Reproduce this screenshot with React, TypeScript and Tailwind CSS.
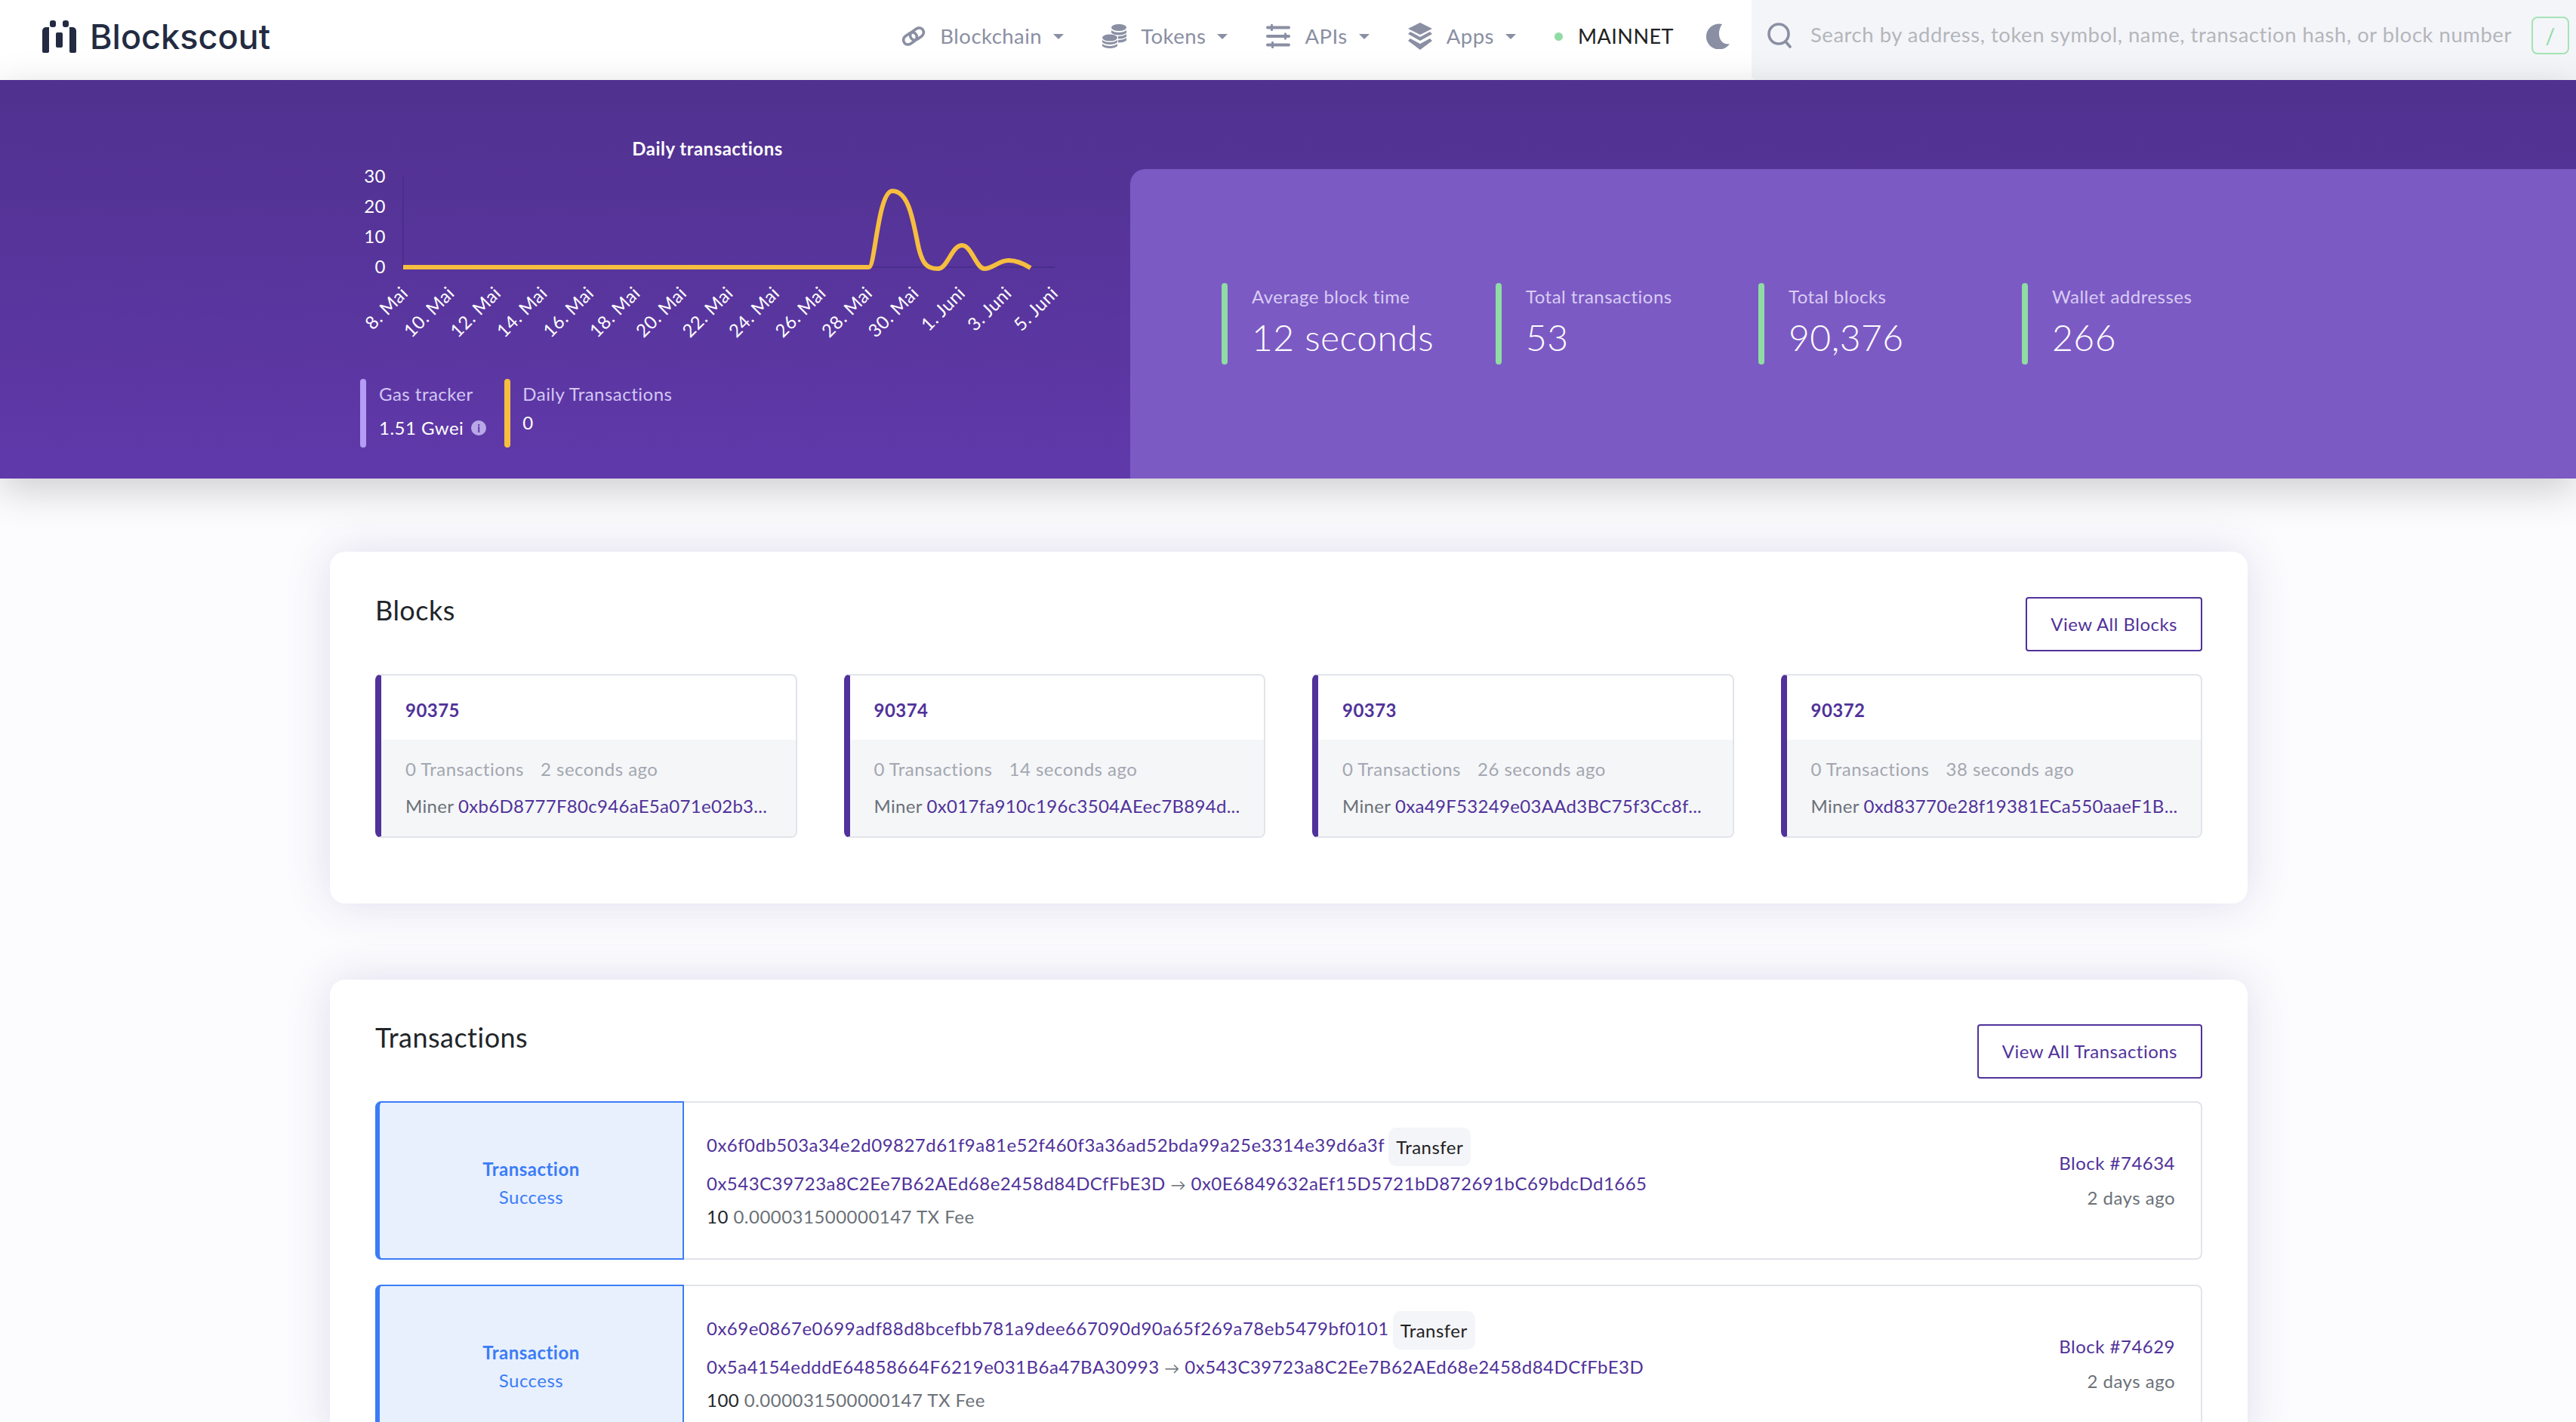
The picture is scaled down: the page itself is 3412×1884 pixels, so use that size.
const blocks = [
  { num: '90375', ago: '2 seconds ago', miner: '0xb6D8777F80c946aE5a071e02b3...' },
  { num: '90374', ago: '14 seconds ago', miner: '0x017fa910c196c3504AEec7B894d...' },
  { num: '90373', ago: '26 seconds ago', miner: '0xa49F53249e03AAd3BC75f3Cc8f...' },
  { num: '90372', ago: '38 seconds ago', miner: '0xd83770e28f19381ECa550aaeF1B...' },
];

const txs = [
  {
    hash: '0x6f0db503a34e2d09827d61f9a81e52f460f3a36ad52bda99a25e3314e39d6a3f',
    from: '0x543C39723a8C2Ee7B62AEd68e2458d84DCfFbE3D',
    to: '0x0E6849632aEf15D5721bD872691bC69bdcDd1665',
    value: '10',
    block: 'Block #74634',
  },
  {
    hash: '0x69e0867e0699adf88d8bcefbb781a9dee667090d90a65f269a78eb5479bf0101',
    from: '0x5a4154edddE64858664F6219e031B6a47BA30993',
    to: '0x543C39723a8C2Ee7B62AEd68e2458d84DCfFbE3D',
    value: '100',
    block: 'Block #74629',
  },
];

const xLabels = ['8. Mai', '10. Mai', '12. Mai', '14. Mai', '16. Mai', '18. Mai', '20. Mai', '22. Mai', '24. Mai', '26. Mai', '28. Mai', '30. Mai', '1. Juni', '3. Juni', '5. Juni'];

function Caret() {
  return <span className="ml-[15px] h-0 w-0 border-x-[7px] border-t-[7px] border-x-transparent border-t-[#8a8fa3]" />;
}

function NavItem({ icon, label }: { icon: React.ReactNode; label: string }) {
  return (
    <div className="flex items-center">
      {icon}
      <span className="ml-[19px] text-[27.5px] text-[#8a8fa3]">{label}</span>
      <Caret />
    </div>
  );
}

function LinkIcon() {
  return (
    <svg viewBox="0 0 32 26" className="h-[26px] w-[32px]" fill="none" stroke="#8a8fa3" strokeWidth="3.6">
      <rect x="2" y="10" width="19" height="12" rx="6" transform="rotate(-35 11.5 16)" />
      <rect x="11" y="4" width="19" height="12" rx="6" transform="rotate(-35 20.5 10)" />
    </svg>
  );
}

function CoinsIcon() {
  return (
    <svg viewBox="0 0 32 32" className="h-[32px] w-[32px]" fill="#8a8fa3">
      <ellipse cx="22" cy="4.5" rx="10" ry="4.5" />
      <path d="M12 8c2 2 6 3 10 3s8-1 10-3v3.5c-2 2-6 3-10 3s-8-1-10-3z" />
      <path d="M21 16c5 0 9-1 11-3v3.5c-2 2-6 3-11 3z" />
      <path d="M21 21c5 0 9-1 11-3v3.5c-2 2-6 3-11 3z" />
      <ellipse cx="10" cy="18" rx="10" ry="4.5" />
      <path d="M0 21c2 2 6 3 10 3s8-1 10-3v3c-2 2-6 3-10 3s-8-1-10-3z" />
      <path d="M0 26c2 2 6 3 10 3s8-1 10-3v3c-2 2-6 3-10 3s-8-1-10-3z" />
    </svg>
  );
}

function SlidersIcon() {
  return (
    <svg viewBox="0 0 32 34" className="h-[34px] w-[32px]" fill="#8a8fa3">
      <rect x="0" y="3.5" width="32" height="4" rx="2" />
      <rect x="6" y="1" width="3" height="9" rx="1" />
      <rect x="0" y="15" width="32" height="4" rx="2" />
      <rect x="24" y="12.5" width="3" height="9" rx="1" />
      <rect x="0" y="26.5" width="32" height="4" rx="2" />
      <rect x="7" y="24" width="3" height="9" rx="1" />
    </svg>
  );
}

function LayersIcon() {
  return (
    <svg viewBox="0 0 32 36" className="h-[36px] w-[32px]" fill="#8a8fa3">
      <path d="M16 0 32 8 16 16 0 8z" />
      <path d="M3 12 16 19 29 12 32 15 16 24 0 15z" />
      <path d="M3 21 16 28 29 21 32 24 16 36 0 24z" />
    </svg>
  );
}

function Header() {
  return (
    <header className="flex h-[106px] items-center bg-white">
      <div className="flex items-center pb-[10px] pl-[56px]">
        <svg viewBox="0 0 45 43" className="h-[43px] w-[45px]" fill="#232b42">
          <path d="M0 14a5 5 0 0 1 5-5h4v32a2 2 0 0 1-2 2H2a2 2 0 0 1-2-2z" />
          <path d="M45 14a5 5 0 0 0-5-5h-4v32a2 2 0 0 0 2 2h5a2 2 0 0 0 2-2z" />
          <rect x="10" y="0" width="8" height="9" rx="3" />
          <rect x="27" y="0" width="8" height="9" rx="3" />
          <rect x="18" y="16" width="9" height="20" rx="2" />
        </svg>
        <span className='ml-[18px] font-["Inter",sans-serif] text-[45px] leading-none font-medium tracking-normal text-[#232b42]'>Blockscout</span>
      </div>
      <nav className="ml-auto flex items-center gap-[43px] pr-[28px] pb-[10px]">
        <div className="mr-[8px] flex items-center gap-[51px]">
          <NavItem icon={<LinkIcon />} label="Blockchain" />
          <NavItem icon={<CoinsIcon />} label="Tokens" />
          <NavItem icon={<SlidersIcon />} label="APIs" />
          <NavItem icon={<LayersIcon />} label="Apps" />
        </div>
        <div className="flex items-center gap-[20px]">
          <span className="h-[11px] w-[11px] rounded-full bg-[#8fdca4]" />
          <span className="text-[27px] text-[#222]">MAINNET</span>
        </div>
        <svg viewBox="0 0 32 34" className="h-[34px] w-[32px]" fill="#8a8fa3">
          <path d="M21 1A17 17 0 1 0 31 27C19 30 12 14 21 1z" />
        </svg>
      </nav>
      <div className="flex h-full w-[1092px] items-center rounded-bl-[6px] bg-[#f4f5f9] pr-[9px] pb-[12px] pl-[21px]">
        <svg viewBox="0 0 32 34" className="h-[34px] w-[32px]" fill="none" stroke="#8a8fa3" strokeWidth="3.6" strokeLinecap="round">
          <circle cx="15" cy="15" r="13" />
          <path d="m24 25 6 7" />
        </svg>
        <span className="ml-[25px] -mt-[3px] flex-1 text-[27.5px] tracking-[0.52px] whitespace-nowrap text-[#b4b6bb]">Search by address, token symbol, name, transaction hash, or block number</span>
        <span className="flex h-[50px] w-[50px] items-center justify-center rounded-[8px] border-2 border-[#a5e3b6] text-[28px] text-[#8fdca4]">/</span>
      </div>
    </header>
  );
}

function Chart() {
  return (
    <svg viewBox="0 0 960 300" className="h-[300px] w-[960px]">
      <text x="480" y="26" fontSize="24" fontWeight="700" fill="#fff" textAnchor="middle">Daily transactions</text>
      {[['30', 53], ['20', 93], ['10', 133], ['0', 173]].map(([t, y]) => (
        <text key={t} x="54" y={Number(y) + 9} fontSize="24" fill="#fff" textAnchor="end">{t}</text>
      ))}
      <path d="M77 54v121M77 174h863" stroke="#4a2e8c" strokeWidth="2" fill="none" />
      <path
        d="M77 174H694C702 174 706 73 725 73C746 73 752 110 758 140C764 172 772 176 785 176C798 176 804 145 817 145C830 145 836 176 847 176C858 176 866 165 879 165C890 165 900 170 908 175"
        stroke="#f6be3f"
        strokeWidth="6"
        fill="none"
      />
      {xLabels.map((t, i) => (
        <text key={t} transform={`translate(${85 + i * 61.5} 210) rotate(-45)`} fontSize="24" fill="#fff" textAnchor="end">{t}</text>
      ))}
    </svg>
  );
}

function Stat({ label, value, width }: { label: string; value: string; width: string }) {
  return (
    <div className={`flex h-[108px] ${width}`}>
      <div className="h-full w-[8px] rounded-full bg-[#8fdca4]" />
      <div className="ml-[32px]">
        <div className="mt-[4px] text-[24px] leading-[28px] text-[#d9ccf5]">{label}</div>
        <div className="mt-[10px] text-[48px] leading-[60px] font-light text-white">{value}</div>
      </div>
    </div>
  );
}

function Hero() {
  return (
    <section className="relative z-10 flex h-[528px] bg-gradient-to-b from-[#50318f] to-[#6039aa] shadow-[0_15px_50px_rgba(0,0,0,0.19)]">
      <div className="w-[1497px] pt-[74px] pl-[477px]">
        <div className="-ml-[20px]">
          <Chart />
        </div>
        <div className="mt-[22px] flex h-[91px] gap-[24px]">
          <div className="flex">
            <div className="h-full w-[8px] rounded-full bg-[#b59cf5]" />
            <div className="ml-[17px]">
              <div className="mt-[6px] text-[24px] leading-[28px] text-[#d3c6f4]">Gas tracker</div>
              <div className="mt-[17px] flex items-center gap-[10px] text-[24px] leading-[28px] text-white">
                1.51 Gwei
                <span className="flex h-[20px] w-[20px] items-center justify-center rounded-full bg-[#b9a8e8] text-[15px] font-bold text-[#5f39aa]">i</span>
              </div>
            </div>
          </div>
          <div className="flex">
            <div className="h-full w-[8px] rounded-full bg-[#f6be3f]" />
            <div className="ml-[16px]">
              <div className="mt-[6px] text-[24px] leading-[28px] text-[#d3c6f4]">Daily Transactions</div>
              <div className="mt-[10px] text-[24px] leading-[28px] text-white">0</div>
            </div>
          </div>
        </div>
      </div>
      <div className="mt-[118px] flex flex-1 items-start rounded-tl-[20px] bg-[#7c5ac4] pt-[151px] pl-[121px]">
        <Stat label="Average block time" value="12 seconds" width="w-[363px]" />
        <Stat label="Total transactions" value="53" width="w-[348px]" />
        <Stat label="Total blocks" value="90,376" width="w-[349px]" />
        <Stat label="Wallet addresses" value="266" width="w-[300px]" />
      </div>
    </section>
  );
}

function Card({ title, action, className, children }: { title: string; action: string; className: string; children: React.ReactNode }) {
  return (
    <section className={`mr-[435px] ml-[437px] rounded-[20px] bg-white px-[60px] shadow-[0_0_60px_rgba(60,40,140,0.15)] ${className}`}>
      <div className="flex items-start justify-between">
        <h2 className="-mt-[8px] text-[36px] leading-[50px] text-[#212529]">{title}</h2>
        <button className="h-[72px] rounded-[4px] border-2 border-[#50329a] px-[31px] text-[24px] text-[#50329a]">{action}</button>
      </div>
      {children}
    </section>
  );
}

function BlockCard({ num, ago, miner }: { num: string; ago: string; miner: string }) {
  return (
    <div className="h-[217px] overflow-hidden rounded-[8px] border-2 border-l-8 border-[#e1e4ea] border-l-[#50329a]">
      <div className="flex h-[85px] items-center pt-[7px] pl-[32px] text-[24px] font-bold text-[#50329a]">{num}</div>
      <div className="h-[128px] bg-[#f5f6f8] pt-[22px] pl-[32px] text-[24px] whitespace-nowrap">
        <div className="flex gap-[22px] leading-[34px] text-[#a3a7b0]">
          <span>0 Transactions</span>
          <span>{ago}</span>
        </div>
        <div className="mt-[15px] leading-[34px] tracking-[0.3px] text-[#6b7178]">
          Miner <span className="text-[#50329a]">{miner}</span>
        </div>
      </div>
    </div>
  );
}

function TxRow({ hash, from, to, value, block }: (typeof txs)[number]) {
  return (
    <div className="flex h-[210px] rounded-[8px] border-2 border-[#e1e4ea] text-[24px]">
      <div className="-my-[2px] -ml-[2px] flex w-[409px] flex-col items-center justify-center gap-[3px] rounded-l-[8px] border-2 border-l-[6px] border-[#3b7cf6] bg-[#e8f0fe] pt-[6px] leading-[34px] text-[#3b7cf6]">
        <span className="font-bold">Transaction</span>
        <span>Success</span>
      </div>
      <div className="flex flex-1 flex-col justify-center pb-[8px] pl-[30px]">
        <div className="flex items-center text-[#50329a]">
          {hash}
          <span className="ml-[5px] flex h-[51px] translate-y-[3px] items-center rounded-[10px] bg-[#f4f5f9] px-[10px] text-[#222]">Transfer</span>
        </div>
        <div className="mt-[9px] leading-[34px] text-[#50329a]">
          {from} <span className="text-[20px] text-[#6b7178]">→</span> {to}
        </div>
        <div className="mt-[9px] leading-[34px] text-[#6b7178]">
          <span className="text-[#212529]">{value}</span> 0.000031500000147 TX Fee
        </div>
      </div>
      <div className="flex flex-col items-end justify-center gap-[12px] pr-[34px] leading-[34px]">
        <span className="text-[#50329a]">{block}</span>
        <span className="text-[#6b7178]">2 days ago</span>
      </div>
    </div>
  );
}

export default function App() {
  return (
    <div className='h-[1884px] overflow-hidden bg-[#fcfcfe] font-["Lato",sans-serif] tracking-[0.48px]'>
      <Header />
      <Hero />
      <Card title="Blocks" action="View All Blocks" className="mt-[97px] h-[466px] pt-[60px]">
        <div className="mt-[30px] grid grid-cols-4 gap-[62px]">
          {blocks.map((b) => (
            <BlockCard key={b.num} {...b} />
          ))}
        </div>
      </Card>
      <Card title="Transactions" action="View All Transactions" className="mt-[101px] pt-[59px]">
        <div className="mt-[30px] flex flex-col gap-[33px]">
          {txs.map((t) => (
            <TxRow key={t.hash} {...t} />
          ))}
        </div>
      </Card>
    </div>
  );
}
